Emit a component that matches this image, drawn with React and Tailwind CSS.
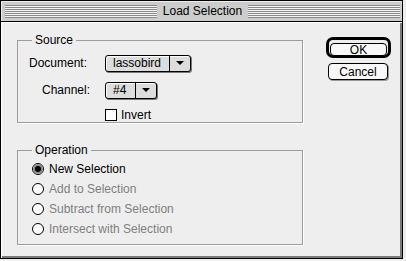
import React from 'react';

const font = { fontFamily: '"Liberation Sans", Arial, sans-serif' };

function Stripes() {
  return (
    <div className="flex-1 h-[13px] bg-[image:repeating-linear-gradient(to_bottom,#8a8a8a_0px,#8a8a8a_1px,#f4f4f4_1px,#f4f4f4_2px)]" />
  );
}

function Popup({ value, main, arrow }) {
  return (
    <div className="flex h-[17px] border border-black rounded-[3px] bg-[#dddddd] shadow-[1px_1px_0_#777,inset_1px_1px_0_#fff]">
      <div className={`${main} flex items-center pl-[7px] border-r border-black leading-none`}>{value}</div>
      <div className={`${arrow} flex items-center justify-center`}>
        <div className="w-0 h-0 border-l-[4px] border-r-[4px] border-t-[4px] border-l-transparent border-r-transparent border-t-black" />
      </div>
    </div>
  );
}

function Group({ label, className, children }) {
  return (
    <div className={`relative border border-[#9c9c9c] shadow-[1px_1px_0_#fff] ${className}`}>
      <span className="absolute -top-[8px] left-[14px] px-[3px] bg-[#eeeeee] leading-[14px]">{label}</span>
      {children}
    </div>
  );
}

function Radio({ label, checked, disabled }) {
  return (
    <div className="flex items-center h-[20px]">
      <div className="w-[12px] h-[12px] rounded-full border border-black bg-white flex items-center justify-center">
        {checked && (
          <div className="w-[10px] h-[10px] rounded-full bg-[#8c8c8c] flex items-center justify-center">
            <div className="w-[6px] h-[6px] rounded-full bg-black" />
          </div>
        )}
      </div>
      <span className={`ml-[5px] ${disabled ? 'text-[#808080]' : 'text-black'}`}>{label}</span>
    </div>
  );
}

export default function App() {
  return (
    <div className="w-[406px] h-[261px] bg-[#eeeeee] text-[12px] text-black" style={font}>
      <div className="w-[403px] h-[259px] border border-black flex flex-col bg-[#eeeeee]">
        {/* Title bar */}
        <div className="h-[21px] border-b border-black bg-[#cccccc] flex items-center pl-[4px] pr-[2px] shadow-[inset_1px_1px_0_#eee]">
          <Stripes />
          <span className="px-[6px] leading-none">Load Selection</span>
          <Stripes />
        </div>

        {/* Body */}
        <div className="flex-1 flex pl-[16px] shadow-[inset_1px_1px_0_#fff,inset_-2px_-2px_0_#7a7a7a]">
          <div className="w-[286px] pt-[18px] flex flex-col">
            <Group label="Source" className="h-[83px] pt-[13px]">
              <div className="flex items-center">
                <span className="w-[87px] pl-[11px]">Document:</span>
                <Popup value="lassobird" main="w-[64px]" arrow="w-[20px]" />
              </div>
              <div className="flex items-center mt-[9px]">
                <span className="w-[87px] pl-[24px]">Channel:</span>
                <Popup value="#4" main="w-[30px]" arrow="w-[20px]" />
              </div>
              <div className="flex items-center mt-[10px] pl-[87px]">
                <div className="w-[12px] h-[12px] border border-black bg-white" />
                <span className="ml-[4px] leading-none">Invert</span>
              </div>
            </Group>

            <Group label="Operation" className="h-[95px] mt-[27px] pt-[8px] pl-[14px]">
              <Radio label="New Selection" checked />
              <Radio label="Add to Selection" disabled />
              <Radio label="Subtract from Selection" disabled />
              <Radio label="Intersect with Selection" disabled />
            </Group>
          </div>

          <div className="ml-[23px] pt-[15px] flex flex-col items-start">
            <div className="w-[65px] h-[21px] border-[3px] border-black rounded-[7px] p-[1px] bg-[#eeeeee]">
              <button className="w-full h-full border border-black rounded-[4px] bg-[#f8f8f8] text-[12px] leading-none">OK</button>
            </div>
            <button className="mt-[5px] ml-[2px] w-[60px] h-[17px] border border-black rounded-[4px] bg-[#f8f8f8] text-[12px] leading-none shadow-[1px_1px_0_#999]">Cancel</button>
          </div>
        </div>
      </div>
    </div>
  );
}
